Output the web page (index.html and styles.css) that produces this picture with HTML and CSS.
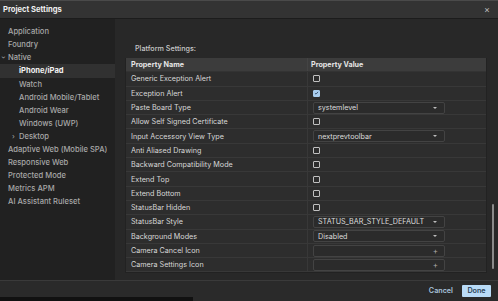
FILE: index.html
```html
<!DOCTYPE html>
<html>
<head>
<meta charset="utf-8">
<link rel="stylesheet" href="styles.css">
</head>
<body>
<div class="dialog">
  <div class="titlebar">
    <span class="title">Project Settings</span>
    <span class="close">×</span>
  </div>
  <div class="main">
    <nav class="sidebar">
      <div class="nav-item">Application</div>
      <div class="nav-item">Foundry</div>
      <div class="nav-item group"><span class="chev down">›</span>Native</div>
      <div class="nav-item sub active">iPhone/iPad</div>
      <div class="nav-item sub">Watch</div>
      <div class="nav-item sub">Android Mobile/Tablet</div>
      <div class="nav-item sub">Android Wear</div>
      <div class="nav-item sub">Windows (UWP)</div>
      <div class="nav-item sub group2"><span class="chev">›</span>Desktop</div>
      <div class="nav-item">Adaptive Web (Mobile SPA)</div>
      <div class="nav-item">Responsive Web</div>
      <div class="nav-item">Protected Mode</div>
      <div class="nav-item">Metrics APM</div>
      <div class="nav-item">AI Assistant Ruleset</div>
    </nav>
    <section class="content">
      <div class="section-label">Platform Settings:</div>
      <div class="table">
        <div class="row head"><div class="c1">Property Name</div><div class="c2">Property Value</div></div>
        <div class="row"><div class="c1">Generic Exception Alert</div><div class="c2"><span class="cb"></span></div></div>
        <div class="row"><div class="c1">Exception Alert</div><div class="c2"><span class="cb checked"><svg viewBox="0 0 8 8" width="6" height="6"><path d="M1.5 4.2 L3.2 5.8 L6.5 2.2" fill="none" stroke="#1f3550" stroke-width="1.2"/></svg></span></div></div>
        <div class="row"><div class="c1">Paste Board Type</div><div class="c2"><div class="select"><span>systemlevel</span><span class="caret"></span></div></div></div>
        <div class="row"><div class="c1">Allow Self Signed Certificate</div><div class="c2"><span class="cb"></span></div></div>
        <div class="row"><div class="c1">Input Accessory View Type</div><div class="c2"><div class="select"><span>nextprevtoolbar</span><span class="caret"></span></div></div></div>
        <div class="row"><div class="c1">Anti Aliased Drawing</div><div class="c2"><span class="cb"></span></div></div>
        <div class="row"><div class="c1">Backward Compatibility Mode</div><div class="c2"><span class="cb"></span></div></div>
        <div class="row"><div class="c1">Extend Top</div><div class="c2"><span class="cb"></span></div></div>
        <div class="row"><div class="c1">Extend Bottom</div><div class="c2"><span class="cb"></span></div></div>
        <div class="row"><div class="c1">StatusBar Hidden</div><div class="c2"><span class="cb"></span></div></div>
        <div class="row"><div class="c1">StatusBar Style</div><div class="c2"><div class="select"><span>STATUS_BAR_STYLE_DEFAULT</span><span class="caret"></span></div></div></div>
        <div class="row"><div class="c1">Background Modes</div><div class="c2"><div class="select"><span>Disabled</span><span class="caret"></span></div></div></div>
        <div class="row"><div class="c1">Camera Cancel Icon</div><div class="c2"><div class="select add"><span></span><span class="plus">+</span></div></div></div>
        <div class="row"><div class="c1">Camera Settings Icon</div><div class="c2"><div class="select add"><span></span><span class="plus">+</span></div></div></div>
      </div>
      <div class="scrollbar"></div>
    </section>
  </div>
  <div class="footer">
    <button class="btn cancel">Cancel</button>
    <button class="btn done">Done</button>
  </div>
  <div class="bottom-edge"></div>
</div>
</body>
</html>
```
FILE: styles.css
```css
* { box-sizing: border-box; }
html, body { margin: 0; padding: 0; }
body {
  width: 498px;
  height: 301px;
  overflow: hidden;
  background: #282828;
  font-family: Inter, "Noto Sans", sans-serif;
  font-size: 7.2px;
  color: #d8d8d8;
}
.dialog {
  width: 498px;
  height: 301px;
  display: flex;
  flex-direction: column;
  background: #282828;
}
.titlebar {
  height: 19px;
  flex: none;
  display: flex;
  align-items: center;
  justify-content: space-between;
  padding: 0 8px 0 3px;
  background: #333333;
  border-top: 1px solid #4a4a4a;
  border-bottom: 1px solid #1c1c1c;
}
.title {
  font-weight: 700;
  font-size: 7.6px;
  color: #f0f0f0;
}
.close {
  font-size: 9px;
  color: #bdbdbd;
  line-height: 1;
}
.main {
  flex: 1;
  display: flex;
  min-height: 0;
}
.sidebar {
  width: 115px;
  flex: none;
  background: #212121;
  padding-top: 5.5px;
  display: flex;
  flex-direction: column;
  font-size: 7.6px;
}
.nav-item {
  height: 13px;
  line-height: 13px;
  padding-left: 8px;
  color: #a8a8a8;
  white-space: nowrap;
  position: relative;
  font-weight: 500;
}
.nav-item.sub { padding-left: 19px; }
.nav-item.active {
  background: #313131;
  color: #f2f2f2;
  font-weight: 700;
  height: 14px;
  line-height: 14px;
}
.chev {
  position: absolute;
  font-size: 7px;
  color: #9a9a9a;
}
.group .chev { left: 2px; }
.group2 .chev { left: 12px; }
.chev.down { transform: rotate(90deg); }
.content {
  flex: 1;
  position: relative;
  padding: 23px 11px 0 10px;
  background: #282828;
}
.section-label {
  height: 13px;
  line-height: 13px;
  padding-left: 10px;
  color: #c9c9c9;
  font-weight: 500;
}
.table {
  margin-top: 3px;
  width: 362px;
  border: 1px solid #222;
  border-top: none;
}
.row {
  display: flex;
  height: 14.3px;
  align-items: center;
  background: #2d2d2d;
  border-bottom: 1px solid #383838;
}
.row.head {
  background: #3c3c3c;
  font-weight: 700;
  color: #e6e6e6;
  border-bottom: 1px solid #333;
}
.c1 {
  width: 182px;
  padding-left: 5px;
  height: 100%;
  display: flex;
  align-items: center;
  border-right: 1px solid #383838;
  white-space: nowrap;
}
.row.head .c1 { border-right-color: #444; }
.c2 {
  flex: 1;
  height: 100%;
  display: flex;
  align-items: center;
  padding-left: 5px;
}
.row.head .c2 { padding-left: 3px; }
.cb {
  width: 7px;
  height: 7px;
  border: 1px solid #c0c0c0;
  border-radius: 1px;
  display: inline-flex;
  align-items: center;
  justify-content: center;
}
.cb.checked {
  background: #a9cdee;
  border-color: #a9cdee;
}
.select {
  width: 132px;
  height: 12px;
  border: 1px solid #434343;
  border-radius: 2px;
  background: #2b2b2b;
  display: flex;
  align-items: center;
  justify-content: space-between;
  padding: 0 7px 0 4px;
  color: #dcdcdc;
}
.caret {
  width: 0;
  height: 0;
  border-left: 2px solid transparent;
  border-right: 2px solid transparent;
  border-top: 2px solid #bdbdbd;
}
.plus {
  color: #aaa;
  font-size: 8px;
  line-height: 1;
  margin-right: -1px;
}
.scrollbar {
  position: absolute;
  right: 4px;
  top: 185px;
  width: 2px;
  height: 65px;
  background: #8a8a8a;
  border-radius: 1px;
}
.footer {
  height: 17px;
  flex: none;
  border-top: 1px solid #3a3a3a;
  background: #2a2a2a;
  display: flex;
  align-items: center;
  justify-content: flex-end;
  padding: 3px 7px 0 0;
  gap: 9px;
}
.btn {
  font-family: Inter, "Noto Sans", sans-serif;
  font-size: 7.2px;
  font-weight: 600;
  border: none;
  padding: 0;
  cursor: pointer;
}
.cancel {
  background: transparent;
  color: #a9c3dc;
}
.done {
  width: 29px;
  height: 12px;
  background: #b9dbf7;
  color: #2b3f55;
  border-radius: 1px;
}
.bottom-edge {
  height: 4px;
  flex: none;
  background: linear-gradient(to right, #111 0, #111 193px, #2a2a2a 193px);
}
```
